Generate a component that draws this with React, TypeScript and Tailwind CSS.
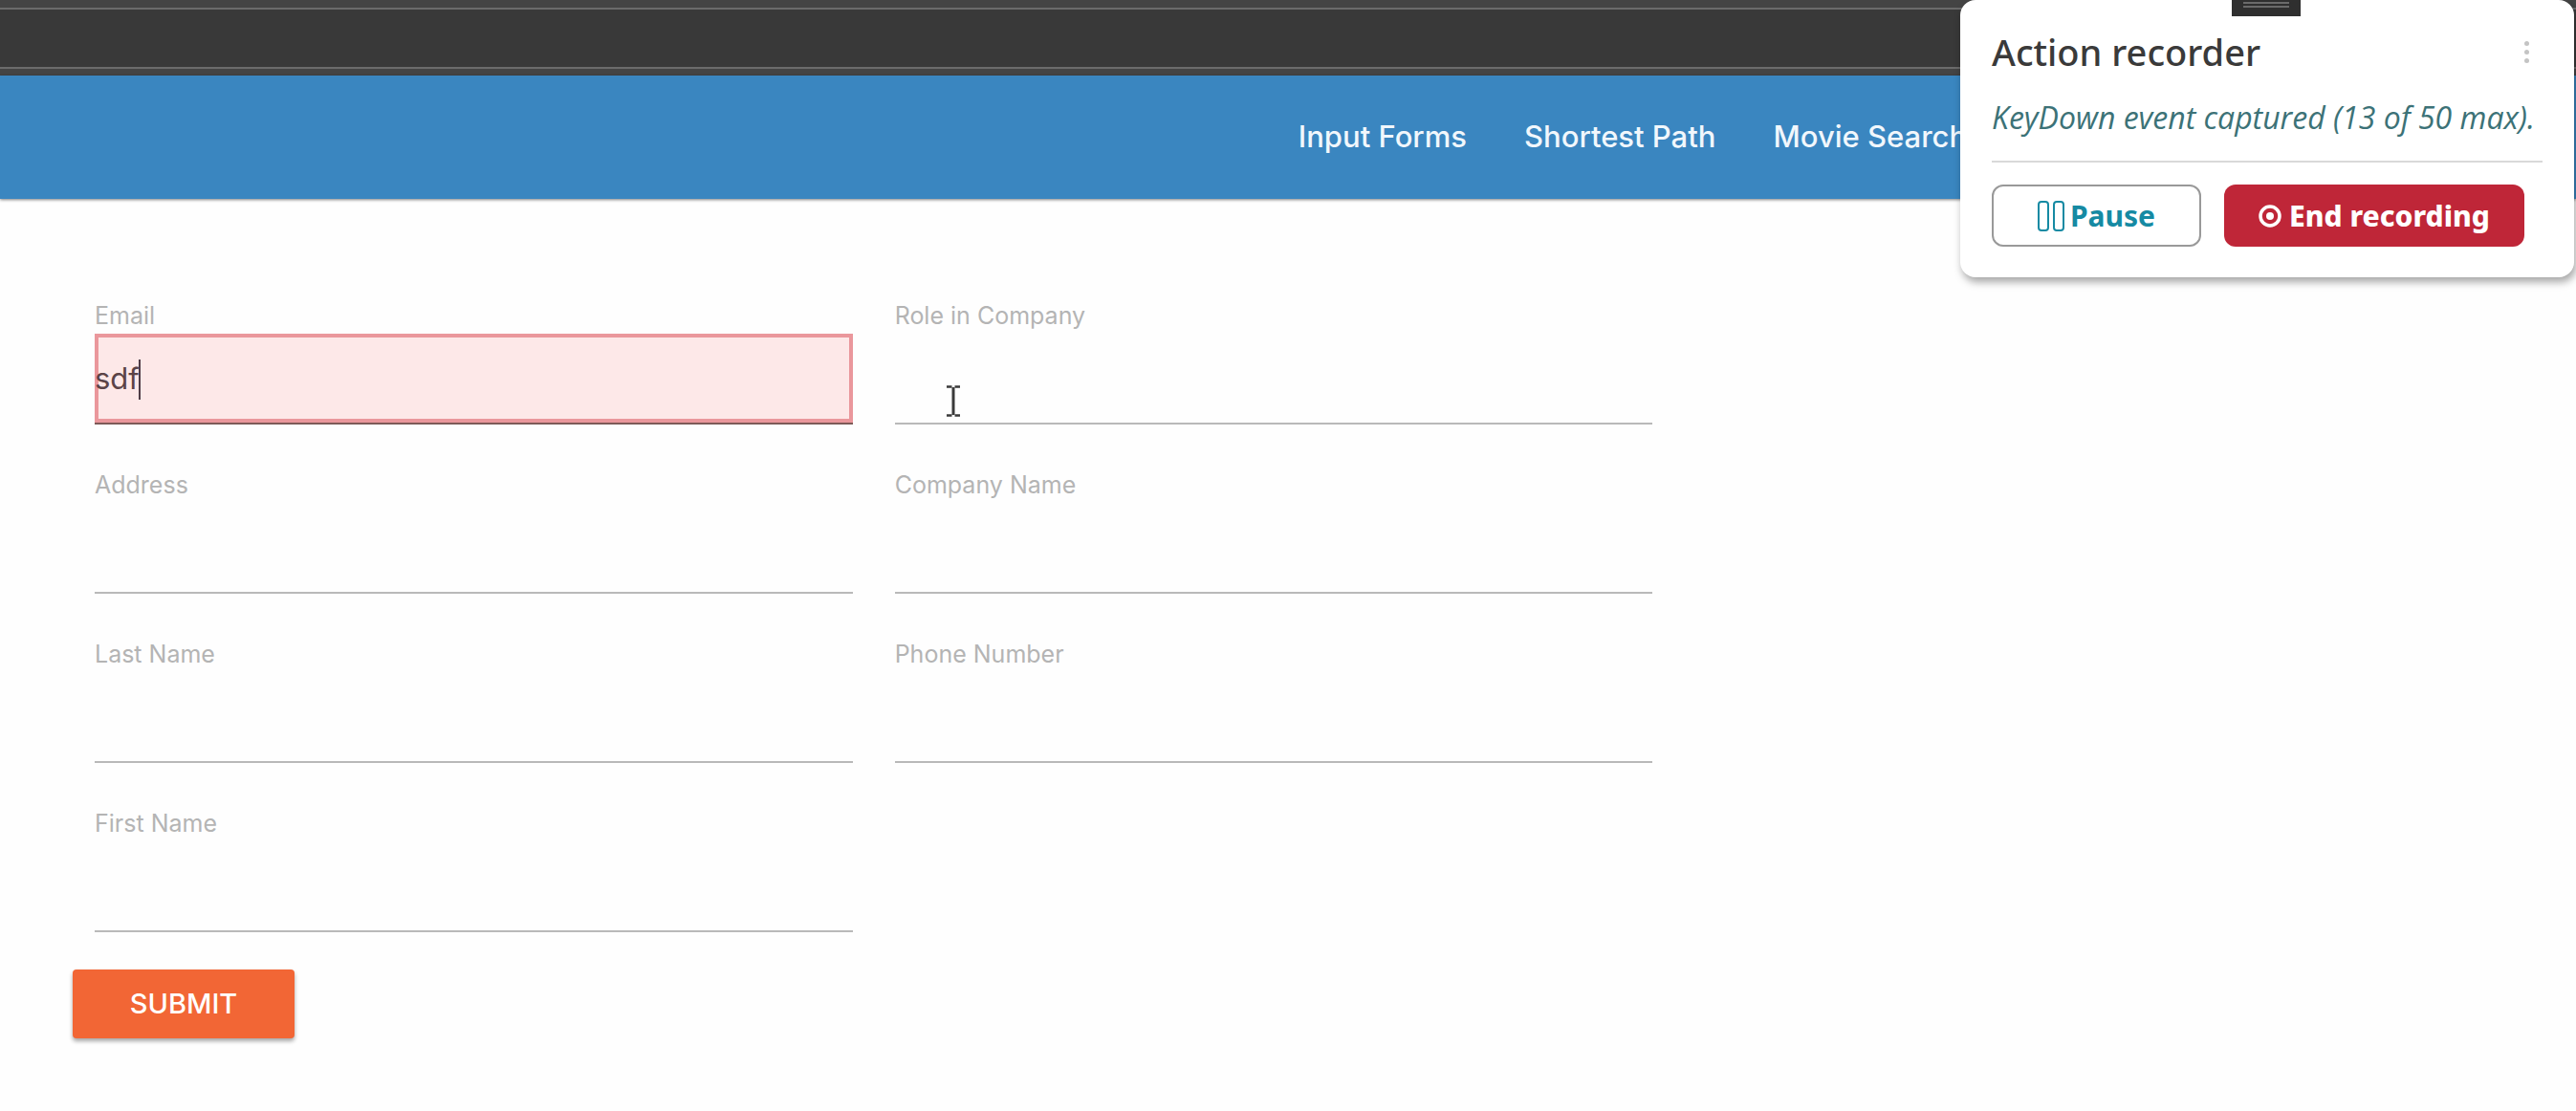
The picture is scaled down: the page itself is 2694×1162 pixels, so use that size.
import React, { useState } from 'react';
import clsx from 'clsx';

type Field = {
  id: string;
  label: string;
  initial?: string;
};

const leftFields: Field[] = [
  { id: 'email', label: 'Email', initial: 'sdf' },
  { id: 'address', label: 'Address' },
  { id: 'lastName', label: 'Last Name' },
  { id: 'firstName', label: 'First Name' },
];

const rightFields: Field[] = [
  { id: 'role', label: 'Role in Company' },
  { id: 'companyName', label: 'Company Name' },
  { id: 'phone', label: 'Phone Number' },
];

const navItems = ['Input Forms', 'Shortest Path', 'Movie Search'];

const TextCursor = () => (
  <svg
    className="absolute left-[54px] top-[54px] h-[33px] w-[14px]"
    viewBox="0 0 14 33"
    fill="none"
    stroke="#3a3a3a"
    strokeWidth="2.4"
  >
    <path d="M0 1.5h5.5M8.5 1.5H14M0 31.5h5.5M8.5 31.5H14" />
    <path d="M7 2v29" strokeWidth="3" />
  </svg>
);

const FormField: React.FC<{ field: Field }> = ({ field }) => {
  const [value, setValue] = useState(field.initial ?? '');
  const captured = field.id === 'email';

  return (
    <div className="flex flex-col">
      <label htmlFor={field.id} className="h-10 text-[25px] leading-[42px] text-[#b4b4b4]">
        {field.label}
      </label>
      <div className="relative">
        <input
          id={field.id}
          type="text"
          value={value}
          onChange={(e) => setValue(e.target.value)}
          className={clsx(
            'block h-[95px] w-full border-b-2 text-[31px] text-[#5b4347] outline-none',
            captured
              ? 'border-[#7d5a58] bg-[#fde8e8] shadow-[inset_0_0_0_4px_#ea979c]'
              : 'border-[#b9b9b9] bg-transparent'
          )}
        />
        {/* Caret of the field being typed in */}
        {captured && <span className="absolute left-[46px] top-[27px] h-[42px] w-[2px] bg-[#4f3d47]" />}
        {field.id === 'role' && <TextCursor />}
      </div>
    </div>
  );
};

const ActionRecorder = () => (
  <aside className="absolute right-[2px] top-0 w-[642px] rounded-2xl bg-white px-[33px] pb-8 pt-[26px] font-['Noto_Sans','Open_Sans',sans-serif] shadow-[2px_5px_8px_rgba(0,0,0,0.35)]">
    {/* Drag handle */}
    <div className="absolute left-[284px] top-0 flex h-[17px] w-[72px] flex-col items-center gap-[2px] bg-[#2f2f2f] pt-[2px]">
      <span className="h-[2px] w-12 bg-[#6a6a6a]" />
      <span className="h-[2px] w-12 bg-[#6a6a6a]" />
    </div>

    <div className="flex h-14 items-center justify-between">
      <h2 className="text-[38px] font-medium text-[#3a3a3a]">Action recorder</h2>
      <button type="button" aria-label="More options" className="flex flex-col gap-1 pr-[14px]">
        <span className="h-[5px] w-[5px] rounded-full bg-[#c4c4c4]" />
        <span className="h-[5px] w-[5px] rounded-full bg-[#c4c4c4]" />
        <span className="h-[5px] w-[5px] rounded-full bg-[#c4c4c4]" />
      </button>
    </div>

    <p className="mt-5 h-10 whitespace-nowrap font-['Open_Sans','Noto_Sans',sans-serif] text-[32px] italic leading-[42px] text-[#3c7277]">
      KeyDown event captured (13 of 50 max).
    </p>

    <div className="mt-[26px] h-[2px] bg-[#d9d9d9]" />

    <div className="mt-[23px] flex gap-6">
      <button
        type="button"
        className="flex h-[65px] w-[219px] items-center justify-center gap-[6px] rounded-xl border-2 border-[#999] text-3xl font-bold text-[#168aa3]"
      >
        <svg className="h-8 w-7" viewBox="0 0 28 32" fill="none" stroke="currentColor" strokeWidth="2">
          <rect x="1" y="1" width="10" height="30" rx="3" />
          <rect x="17" y="1" width="10" height="30" rx="3" />
        </svg>
        Pause
      </button>
      <button
        type="button"
        className="flex h-[65px] w-[314px] items-center justify-center gap-2 rounded-xl bg-[#bf2638] text-3xl font-extrabold text-white"
      >
        <svg className="h-6 w-6" viewBox="0 0 24 24" fill="none">
          <circle cx="12" cy="12" r="10" stroke="currentColor" strokeWidth="3.5" />
          <circle cx="12" cy="12" r="4" fill="currentColor" />
        </svg>
        End recording
      </button>
    </div>
  </aside>
);

export default function App() {
  return (
    <div className="relative min-h-screen overflow-hidden bg-[#fefefe] font-['Inter','Liberation_Sans',sans-serif]">
      {/* Bottom edge of the browser toolbar */}
      <div className="flex h-[79px] flex-col bg-[#444]">
        <div className="mt-2 h-16 border-y-2 border-[#6b6b6b] bg-[#393939]" />
      </div>

      <header className="flex h-[129px] items-center bg-[#3a86c0] shadow-[0_1px_3px_rgba(0,0,0,0.5)]">
        <nav className="ml-[50.4%] flex gap-[60px] whitespace-nowrap text-[31px] font-medium text-[#f1f7fc]">
          {navItems.map((item) => (
            <a key={item} href="#">
              {item}
            </a>
          ))}
        </nav>
      </header>

      <form className="pt-[101px]" onSubmit={(e) => e.preventDefault()}>
        <div className="grid grid-cols-3 gap-x-11 pl-[99px] pr-[129px]">
          <div className="flex flex-col gap-[42px]">
            {leftFields.map((field) => (
              <FormField key={field.id} field={field} />
            ))}
          </div>
          <div className="flex flex-col gap-[42px]">
            {rightFields.map((field) => (
              <FormField key={field.id} field={field} />
            ))}
          </div>
        </div>
        <button
          type="submit"
          className="ml-[76px] mt-[39px] h-[72px] w-[232px] rounded bg-[#f26635] text-[29px] font-medium uppercase text-white shadow-[0_3px_4px_rgba(0,0,0,0.35)]"
        >
          Submit
        </button>
      </form>

      <ActionRecorder />
    </div>
  );
}
